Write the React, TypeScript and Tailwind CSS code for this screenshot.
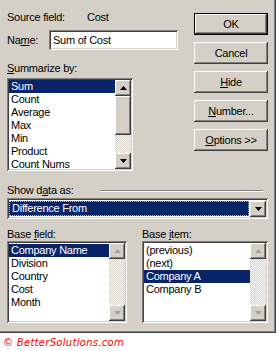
import React from "react";

const raised =
  "shadow-[inset_-1px_-1px_#404040,inset_1px_1px_#ffffff,inset_-2px_-2px_#808080,inset_2px_2px_#d4d0c8]";
const sunken =
  "shadow-[inset_1px_1px_#808080,inset_-1px_-1px_#ffffff,inset_2px_2px_#404040,inset_-2px_-2px_#d4d0c8]";

const Arrow = ({ up, disabled }: { up?: boolean; disabled?: boolean }) => (
  <svg width="7" height="4" viewBox="0 0 7 4">
    {up ? (
      <polygon points="3.5,0 7,4 0,4" fill={disabled ? "#a0a0a0" : "#000"} />
    ) : (
      <polygon points="0,0 7,0 3.5,4" fill={disabled ? "#a0a0a0" : "#000"} />
    )}
  </svg>
);

const ScrollBtn = ({ up, disabled }: { up?: boolean; disabled?: boolean }) => (
  <div className={`flex h-[16px] w-[16px] items-center justify-center bg-[#d4d0c8] ${raised}`}>
    <Arrow up={up} disabled={disabled} />
  </div>
);

const Track = ({ thumb }: { thumb?: boolean }) => (
  <div className="flex w-[16px] flex-col">
    <ScrollBtn up disabled={!thumb} />
    {thumb && <div className={`h-[39px] w-[16px] bg-[#d4d0c8] ${raised}`} />}
    <div className="flex-1 bg-[repeating-conic-gradient(#ffffff_0%_25%,#d4d0c8_0%_50%)] bg-[length:2px_2px]" />
    <ScrollBtn disabled={!thumb} />
  </div>
);

const ListBox = ({
  items,
  selected,
  className,
  thumb,
}: {
  items: string[];
  selected: number;
  className: string;
  thumb?: boolean;
}) => (
  <div className={`flex bg-white p-[2px] ${sunken} ${className}`}>
    <div className={`flex-1 overflow-hidden ${thumb ? "" : "pt-[1px]"}`}>
      {items.map((it, i) => (
        <div
          key={it}
          className={`h-[13px] pl-[2px] leading-[13px] ${
            i === selected ? "bg-[#0a246a] text-white" : "text-black"
          }`}
        >
          {it}
        </div>
      ))}
    </div>
    <Track thumb={thumb} />
  </div>
);

const Btn = ({ children, def }: { children: React.ReactNode; def?: boolean }) => (
  <div
    className={`flex h-[22px] w-[74px] items-center justify-center bg-[#d4d0c8] ${
      def
        ? "shadow-[inset_0_0_0_1px_#000000,inset_-2px_-2px_#404040,inset_2px_2px_#ffffff,inset_-3px_-3px_#808080]"
        : raised
    }`}
  >
    {children}
  </div>
);

const U = ({ children }: { children: React.ReactNode }) => (
  <span className="underline underline-offset-[1px]">{children}</span>
);

export default function App() {
  return (
    <div className="h-[351px] w-[277px] bg-white font-['Liberation_Sans',Arial,sans-serif] text-[11px] leading-[13px] tracking-[-0.25px] text-black">
      <div className="h-[333px] w-[276px] bg-[#d4d0c8] shadow-[inset_-1px_-1px_#404040,inset_-2px_-2px_#808080]">
        <div className="flex">
          <div className="w-[194px] pl-[7px]">
            <div className="mt-[11px] flex h-[13px]">
              <span className="w-[80px]">Source field:</span>
              <span>Cost</span>
            </div>
            <div className="mt-[6px] flex h-[20px] items-center">
              <span className="w-[42px]">
                Na<U>m</U>e:
              </span>
              <div className={`flex h-[20px] w-[129px] items-center bg-white pl-[4px] ${sunken}`}>
                Sum of Cost
              </div>
            </div>
            <div className="mt-[12px] h-[13px]">
              <U>S</U>ummarize by:
            </div>
            <ListBox
              className="mt-[3px] h-[93px] w-[126px]"
              items={["Sum", "Count", "Average", "Max", "Min", "Product", "Count Nums"]}
              selected={0}
              thumb
            />
          </div>
          <div className="flex flex-col gap-[7px] pt-[13px]">
            <Btn def>OK</Btn>
            <Btn>Cancel</Btn>
            <Btn>
              <U>H</U>ide
            </Btn>
            <Btn>
              <U>N</U>umber...
            </Btn>
            <Btn>
              <U>O</U>ptions &gt;&gt;
            </Btn>
          </div>
        </div>

        <div className="mt-[13px] flex h-[13px] items-center pl-[7px]">
          <span className="w-[93px]">
            Show d<U>a</U>ta as:
          </span>
          <div className="h-[2px] w-[163px] border-t border-b border-t-[#808080] border-b-white" />
        </div>
        <div className={`mt-[1px] ml-[7px] flex h-[21px] w-[261px] items-center bg-white p-[2px] ${sunken}`}>
          <div className="mr-[1px] flex h-[15px] flex-1 items-center bg-[#0a246a] pl-[3px] text-white outline-1 outline-dotted -outline-offset-1 outline-[#c0c0a0]">
            Difference From
          </div>
          <ScrollBtn />
        </div>

        <div className="mt-[9px] flex pl-[7px]">
          <div className="w-[135px]">
            <div className="h-[13px]">
              Base <U>f</U>ield:
            </div>
            <ListBox
              className="h-[82px] w-[120px]"
              items={["Company Name", "Division", "Country", "Cost", "Month"]}
              selected={0}
            />
          </div>
          <div>
            <div className="h-[13px]">
              Base <U>i</U>tem:
            </div>
            <ListBox
              className="h-[82px] w-[126px]"
              items={["(previous)", "(next)", "Company A", "Company B"]}
              selected={2}
            />
          </div>
        </div>
      </div>
      <div className="pt-[3px] pl-[3px] font-['DejaVu_Sans',Verdana,sans-serif] text-[10px] italic leading-[13px] tracking-[0.3px] text-[#ff0000]">
        © BetterSolutions.com
      </div>
    </div>
  );
}
